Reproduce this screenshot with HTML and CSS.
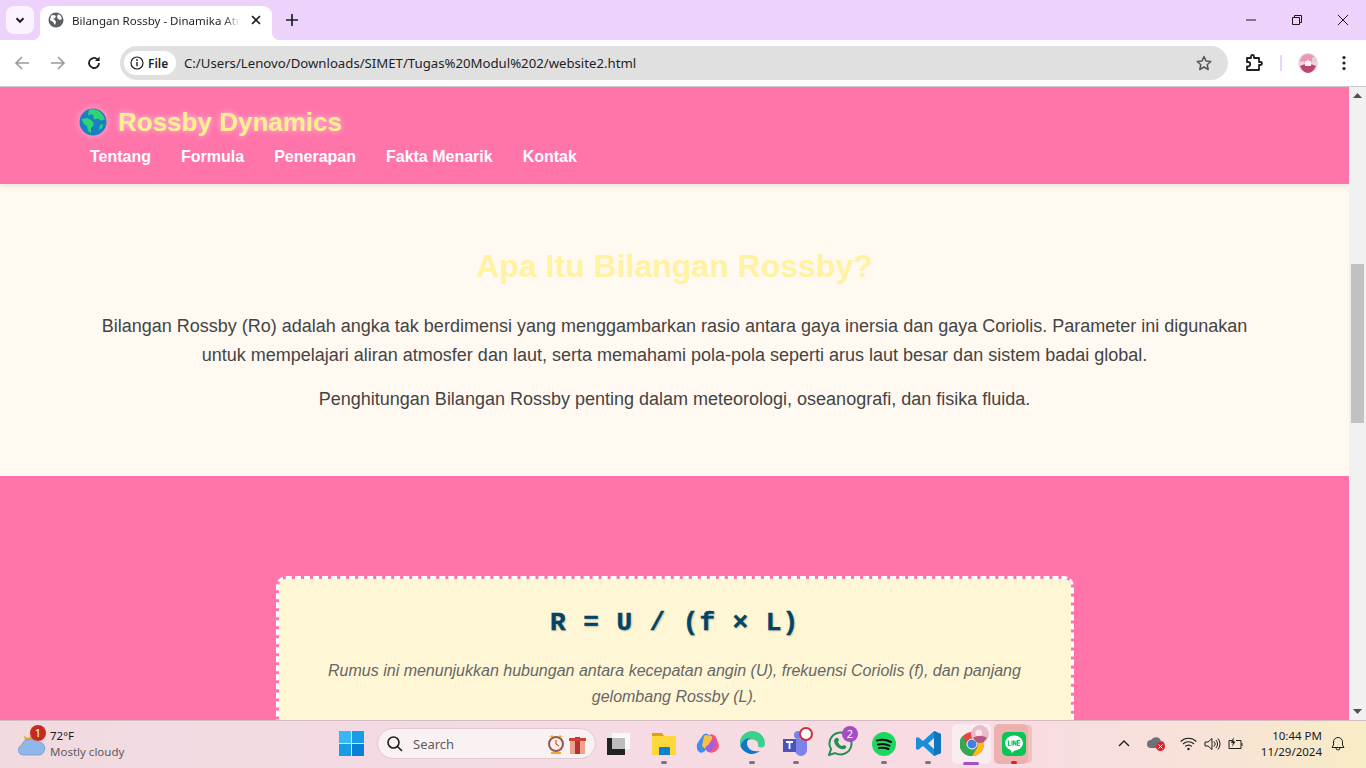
FILE: index.html
```html
<!DOCTYPE html>
<html lang="id">
<head>
<meta charset="utf-8">
<title>Bilangan Rossby - Dinamika Atmosfer</title>
<link rel="stylesheet" href="styles.css">
</head>
<body>
<div class="screen">
  <div class="tabstrip">
    <div class="tab-menu"><svg width="12" height="12" viewBox="0 0 12 12"><path d="M2.5 4.2 6 7.8l3.5-3.6" fill="none" stroke="#1f1f1f" stroke-width="2"/></svg></div>
    <div class="tab">
      <svg class="favicon" width="16" height="16" viewBox="0 0 16 16"><circle cx="8" cy="8" r="7.5" fill="#5b5e63"/><path d="M3 3.5 6 3l2 1-1 2-2 1 2 1 1 2-1 3-2-3-3-2zM10 2l3 2 1 3-2 1-2-1-1-2z" fill="#fff"/></svg>
      <span class="tab-title">Bilangan Rossby - Dinamika Atmosfer</span>
      <svg class="tab-close" width="10" height="10" viewBox="0 0 10 10"><path d="M1 1l8 8M9 1 1 9" stroke="#1f1f1f" stroke-width="1.7"/></svg>
    </div>
    <svg class="new-tab" width="12" height="12" viewBox="0 0 12 12"><path d="M6 0v12M0 6h12" stroke="#1f1f1f" stroke-width="1.7"/></svg>
    <div class="window-controls">
      <svg width="10" height="10" viewBox="0 0 10 10"><path d="M0 5h10" stroke="#1a1a1a"/></svg>
      <svg width="10" height="10" viewBox="0 0 10 10"><path d="M.5 2.5h7v7h-7zM2.5 2.5v-2h7v7h-2" fill="none" stroke="#1a1a1a"/></svg>
      <svg width="10" height="10" viewBox="0 0 10 10"><path d="M0 0l10 10M10 0 0 10" stroke="#1a1a1a"/></svg>
    </div>
  </div>

  <div class="toolbar">
    <svg class="nav-icon" width="16" height="16" viewBox="0 0 16 16"><path d="M15 8H2M8 2 2 8l6 6" fill="none" stroke="#9b9b9b" stroke-width="1.6"/></svg>
    <svg class="nav-icon" width="16" height="16" viewBox="0 0 16 16"><path d="M1 8h13M8 2l6 6-6 6" fill="none" stroke="#9b9b9b" stroke-width="1.6"/></svg>
    <svg class="nav-icon" width="16" height="16" viewBox="0 0 16 16"><path d="M13 8a5 5 0 1 1-1.6-3.7" fill="none" stroke="#1f1f1f" stroke-width="1.8"/><path d="M13.6 1.5v4.6H9z" fill="#1f1f1f"/></svg>
    <div class="omnibox">
      <div class="chip">
        <svg width="14" height="14" viewBox="0 0 14 14"><circle cx="7" cy="7" r="6" fill="none" stroke="#1f1f1f" stroke-width="1.2"/><path d="M7 6v4.2" stroke="#1f1f1f" stroke-width="1.4"/><circle cx="7" cy="4" r=".9" fill="#1f1f1f"/></svg>
        <span>File</span>
      </div>
      <span class="url">C:/Users/Lenovo/Downloads/SIMET/Tugas%20Modul%202/website2.html</span>
      <svg class="star" width="16" height="16" viewBox="0 0 16 16"><path d="M8 1.5 10 6l4.800.5-3.600 3.200 1 4.800L8 12l-4.200 2.500 1-4.800L1.200 6.500 6 6z" fill="none" stroke="#555" stroke-width="1.500" stroke-linejoin="round"/></svg>
    </div>
    <svg class="ext" width="18" height="18" viewBox="0 0 18 18"><path d="M2 4h4V2.500a1.500 1.500 0 0 1 3 0V4h5v4h1.500a1.500 1.500 0 0 1 0 3H14v5H2v-3.500h1a2 2 0 0 0 0-4.500H2z" fill="none" stroke="#1f1f1f" stroke-width="1.800" stroke-linejoin="round"/></svg>
    <div class="divider"></div>
    <svg class="avatar" width="20" height="20" viewBox="0 0 20 20"><circle cx="10" cy="10" r="10" fill="#f0d3dc"/><path d="M2 9q1-8 8-8t8 8l-3-2-2 3-3-4-3 4-2-2z" fill="#e89ab0"/><path d="M2 13q8-4 16 0-3 7-8 7t-8-7z" fill="#b8476d"/><path d="M7 8h6v5H7z" fill="#fbeff2"/><circle cx="16" cy="6" r="2" fill="#d9d9d9"/></svg>
    <svg class="kebab" width="4" height="16" viewBox="0 0 4 16"><circle cx="2" cy="2.500" r="1.600" fill="#1f1f1f"/><circle cx="2" cy="8" r="1.600" fill="#1f1f1f"/><circle cx="2" cy="13.500" r="1.600" fill="#1f1f1f"/></svg>
  </div>

  <div class="viewport">
    <div class="page">
      <header class="site-header">
        <div class="brand">
          <svg class="globe" width="28" height="28" viewBox="0 0 28 28"><circle cx="14" cy="14" r="13.500" fill="#1b7fc4"/><path d="M10 1.500q5-1 9 1 5 3 7 9l-4 1-3-2-3 1-2-2 1-2-3-1-3 1zM3 11l5-1 4 2 3 3-1 3-2 2v5l-3-2-1-5-3-2-2-4z" fill="#2ed573"/><path d="M21 17l3-1-1 4-3 2z" fill="#2ed573"/></svg>
          <h1 class="brand-name">Rossby Dynamics</h1>
        </div>
        <nav class="site-nav">
          <a class="nav-link">Tentang</a>
          <a class="nav-link">Formula</a>
          <a class="nav-link">Penerapan</a>
          <a class="nav-link">Fakta Menarik</a>
          <a class="nav-link">Kontak</a>
        </nav>
      </header>

      <section class="intro">
        <h2 class="intro-title">Apa Itu Bilangan Rossby?</h2>
        <p class="intro-text">Bilangan Rossby (Ro) adalah angka tak berdimensi yang menggambarkan rasio antara gaya inersia dan gaya Coriolis. Parameter ini digunakan untuk mempelajari aliran atmosfer dan laut, serta memahami pola-pola seperti arus laut besar dan sistem badai global.</p>
        <p class="intro-text">Penghitungan Bilangan Rossby penting dalam meteorologi, oseanografi, dan fisika fluida.</p>
      </section>

      <section class="formula-section">
        <div class="formula-card">
          <div class="formula">R = U / (f × L)</div>
          <p class="formula-note">Rumus ini menunjukkan hubungan antara kecepatan angin (U), frekuensi Coriolis (f), dan panjang gelombang Rossby (L).</p>
        </div>
      </section>
    </div>
    <div class="scrollbar">
      <svg class="arrow" width="9" height="5" viewBox="0 0 9 5"><path d="M4.500 0 9 5H0z" fill="#505050"/></svg>
      <div class="thumb"></div>
      <svg class="arrow arrow-down" width="9" height="5" viewBox="0 0 9 5"><path d="M4.500 5 9 0H0z" fill="#505050"/></svg>
    </div>
  </div>

  <footer class="taskbar">
    <div class="weather">
      <svg class="weather-icon" width="28" height="26" viewBox="0 0 28 26"><path d="M7 14 3 13l4-3-1-5 4 2 4-3 1 6z" fill="#f2a531"/><path d="M5 24a5 5 0 0 1-1-9.800A8 8 0 0 1 18 11a6.500 6.500 0 0 1 4 13z" fill="#8fb7e8" stroke="#6f9bd8" stroke-width=".8"/></svg>
      <span class="weather-badge">1</span>
      <div class="weather-text">
        <span class="temp">72°F</span>
        <span class="cond">Mostly cloudy</span>
      </div>
    </div>
    <div class="center">
      <svg class="win" width="25" height="25" viewBox="0 0 25 25"><path d="M0 0h12v12H0z" fill="#39b7f0"/><path d="M13 0h12v12H13z" fill="#1a9be6"/><path d="M0 13h12v12H0z" fill="#1a9be6"/><path d="M13 13h12v12H13z" fill="#0a7fd6"/></svg>
      <div class="search">
        <svg width="16" height="16" viewBox="0 0 16 16"><circle cx="6.500" cy="6.500" r="5.500" fill="none" stroke="#1f1f1f" stroke-width="1.600"/><path d="m10.500 10.500 4.500 4.500" stroke="#1f1f1f" stroke-width="1.600"/></svg>
        <span class="search-label">Search</span>
        <svg class="search-art" width="38" height="20" viewBox="0 0 38 20"><circle cx="8" cy="10" r="7" fill="#fbeee4" stroke="#8d5a5a" stroke-width="2"/><path d="M8 6v4l3 2" stroke="#c0392b" fill="none"/><path d="M1 3l3-2 2 2M15 3l-3-2-2 2" fill="#efa92f"/><path d="M3 18h10v2H3z" fill="#efa92f"/><path d="M22 7h15v13H22z" fill="#e8a58e"/><path d="M27 3h5v17h-5z" fill="#b8312f"/><path d="M21 4h17v3H21z" fill="#c8413a"/></svg>
      </div>
      <div class="apps">
        <div class="app app-first">
          <svg width="23" height="22" viewBox="0 0 23 22"><path d="M5 0h18v16H5z" fill="#f8f8f8"/><path d="M0 5h18v17H0z" fill="#222"/><path d="M5 5h13v11H5z" fill="#bdbdbd"/></svg>
        </div>
        <div class="app">
          <svg width="26" height="24" viewBox="0 0 26 24"><path d="M1 1h10l2 3h12v19H1z" fill="#fdd73c"/><path d="M1 1h10l2 3H1z" fill="#d9a21b"/><path d="M9 15h9a1 1 0 0 1 1 1v7H8v-7a1 1 0 0 1 1-1z" fill="#0f7fd0"/></svg>
          <i class="dot"></i>
        </div>
        <div class="app">
          <svg width="24" height="24" viewBox="0 0 24 24"><path d="M7 3q3-3 6 0l2 4-6 12q-3 3-6 1-3-3-2-8z" fill="#3f8fe8"/><path d="M13 3q4-2 7 2l3 8q0 4-3 6-4 3-7 1l-2-3 5-12z" fill="#f0587a"/><path d="M8 4q3-2 5 0l3 3-7 10-3-3z" fill="#f7c23c"/><path d="M9 16l9-9 2 6-6 7q-3 1-5-4z" fill="#a85ce0"/></svg>
        </div>
        <div class="app">
          <svg width="25" height="25" viewBox="0 0 25 25"><path d="M12.500 0a12.500 12.500 0 0 1 12.500 12.500c0 2-1 4-4 4-2 0-3-1-3-2 1-4-3-6-6-6-6 0-11 5-12 7A12.500 12.500 0 0 1 12.500 0z" fill="#3dcf8e"/><path d="M.5 15.500C1.500 10 6 7 10 7c-3 2-4 6-2 9 2 4 7 5 12 4a12.500 12.500 0 0 1-19.500-4.500z" fill="#0f77c8"/></svg>
          <i class="dot"></i>
        </div>
        <div class="app">
          <svg width="27" height="25" viewBox="0 0 27 25"><path d="M8 8h14a2 2 0 0 1 2 2v9a6 6 0 0 1-12 0z" fill="#7b83eb"/><circle cx="15" cy="4" r="4" fill="#7b83eb"/><path d="M0 8h13v13H0z" fill="#4b53bc"/><path d="M3 11h7M6.500 11v7" stroke="#fff" stroke-width="1.800"/></svg>
          <span class="ring"></span>
          <i class="dot"></i>
        </div>
        <div class="app">
          <svg width="25" height="25" viewBox="0 0 25 25"><path d="M1 24l2-6a11 11 0 1 1 4 4z" fill="none" stroke="#1f8f54" stroke-width="2"/><path d="M8 7q2-1 3 2l-1 2q1 3 4 4l2-1q3 1 2 3-2 2-5 1-6-2-7-8 0-2 2-3z" fill="#1f8f54"/></svg>
          <span class="app-badge">2</span>
        </div>
        <div class="app">
          <svg width="24" height="24" viewBox="0 0 24 24"><circle cx="12" cy="12" r="12" fill="#1ed760"/><path d="M5 8.500q7-2 14 1.500M6 12.500q6-1.500 11.500 1.200M7 16q5-1 9.500 1" fill="none" stroke="#111" stroke-width="2" stroke-linecap="round"/></svg>
          <i class="dot"></i>
        </div>
        <div class="app">
          <svg width="25" height="25" viewBox="0 0 25 25"><path d="M18 0l7 3v19l-7 3-11-10-5 4-2-1v-11l2-1 5 4zM18 7l-6 5.500 6 5.500z" fill="#1a8fd8"/><path d="M18 0l7 3v19l-7 3z" fill="#0f76bd"/></svg>
          <i class="dot"></i>
        </div>
        <div class="app app-active">
          <svg width="24" height="24" viewBox="0 0 24 24"><circle cx="12" cy="12" r="12" fill="#e8453c"/><path d="M22.400 6A12 12 0 0 1 12 24l5-8.500A6 6 0 0 0 16 8z" fill="#f9bc15"/><path d="M12 24A12 12 0 0 1 2.500 4l5 8.500A6 6 0 0 0 17 15.500z" fill="#34a853"/><circle cx="12" cy="12" r="5" fill="#3f7fe8" stroke="#fff"/></svg>
          <svg class="chrome-profile" width="18" height="18" viewBox="0 0 16 16"><circle cx="8" cy="8" r="8" fill="#e7bccb"/><circle cx="7" cy="7" r="3" fill="#f8e6ec"/><path d="M2 11q6-3 12 0-2 5-6 5t-6-5z" fill="#b9577c"/></svg>
          <i class="dot dot-active"></i>
        </div>
        <div class="app app-line">
          <svg width="24" height="24" viewBox="0 0 24 24"><rect width="24" height="24" rx="5" fill="#06c755"/><ellipse cx="12" cy="11" rx="9" ry="7.500" fill="#fff"/><path d="M8 17l2 4 4-4z" fill="#fff"/><path d="M6.500 8.500v5h2M10 8.500v5M11.500 13.500v-5l2.500 5v-5M18 8.500h-2.500v5H18M15.500 11H18" fill="none" stroke="#06c755" stroke-width="1.100"/></svg>
          <i class="dot dot-red"></i>
        </div>
      </div>
    </div>
    <div class="tray">
      <svg class="chev" width="12" height="7" viewBox="0 0 12 7"><path d="M1 6l5-5 5 5" fill="none" stroke="#1f1f1f" stroke-width="1.400"/></svg>
      <span class="tray-cloud">
        <svg width="19" height="17" viewBox="0 0 19 17"><path d="M4 13a4 4 0 0 1 0-8 5.500 5.500 0 0 1 10 1 3.500 3.500 0 0 1 0 7z" fill="#6d7278"/><circle cx="13.500" cy="11.500" r="4.500" fill="#e0202c"/><path d="m11.500 9.500 4 4m0-4-4 4" stroke="#fff"/></svg>
      </span>
      <svg class="tray-wifi" width="17" height="14" viewBox="0 0 17 14"><path d="M.7 4.500a11 11 0 0 1 15.600 0M3 7a8 8 0 0 1 11 0M5.300 9.500a4.500 4.500 0 0 1 6.400 0" fill="none" stroke="#1f1f1f" stroke-width="1.100"/><circle cx="8.500" cy="12" r="1.200" fill="#1f1f1f"/></svg>
      <svg width="17" height="14" viewBox="0 0 17 14"><path d="M1 5h3l4-3.500v11L4 9H1z" fill="none" stroke="#1f1f1f"/><path d="M10 4.500a3.500 3.500 0 0 1 0 5M12 3a6 6 0 0 1 0 8M14 1.500a8.500 8.500 0 0 1 0 11" fill="none" stroke="#1f1f1f"/></svg>
      <svg width="16" height="14" viewBox="0 0 16 14"><path d="M4 3.500H1v8h12v-8H8M14 6v3" fill="none" stroke="#1f1f1f"/><path d="M5.500 0 3 6h2l-1 4 3.500-5.500h-2z" fill="#1f1f1f"/></svg>
      <div class="clock"><span>10:44 PM</span><span>11/29/2024</span></div>
      <svg class="bell" width="14" height="15" viewBox="0 0 14 15"><path d="M1 11.500h12l-1.500-2.500V6a4.500 4.500 0 0 0-9 0v3zM5 12a2 2 0 0 0 4 0" fill="none" stroke="#1f1f1f"/></svg>
    </div>
  </footer>
</div>
</body>
</html>
```

FILE: styles.css
```css
* { box-sizing: border-box; }
html, body { margin: 0; height: 100%; overflow: hidden; }
body { font-family: "Liberation Sans", Arial, sans-serif; }
svg { flex: none; display: block; }

.screen { width: 1366px; height: 768px; display: flex; flex-direction: column; overflow: hidden; }

/* Browser chrome */
.tabstrip { height: 40px; background: #edd3fc; display: flex; align-items: flex-start; flex: none; }
.tab-menu { width: 28px; height: 28px; margin: 6px 0 0 6px; background: #fbf3ff; border-radius: 8px; display: flex; align-items: center; justify-content: center; }
.tab { width: 232px; height: 34px; margin: 6px 0 0 6px; padding: 0 8px 6px; background: #fff; border-radius: 9px 9px 0 0; display: flex; align-items: center; position: relative; }
.tab::before, .tab::after { content: ""; position: absolute; bottom: 0; width: 8px; height: 8px; }
.tab::before { left: -8px; background: radial-gradient(circle at 0 0, transparent 8px, #fff 8.500px); }
.tab::after { right: -8px; background: radial-gradient(circle at 100% 0, transparent 8px, #fff 8.500px); }
.tab-title { width: 168px; margin-left: 8px; font: 11.500px "Noto Sans", sans-serif; color: #1f1f1f; white-space: nowrap; overflow: hidden; -webkit-mask-image: linear-gradient(90deg, #000 90%, transparent); mask-image: linear-gradient(90deg, #000 90%, transparent); }
.tab-close { margin-left: 11px; }
.new-tab { margin: 14px 0 0 14px; }
.window-controls { margin-left: auto; height: 40px; display: flex; align-items: center; gap: 36px; padding-right: 18px; }
.window-controls svg { width: 10px; height: 10px; }

.toolbar { height: 47px; flex: none; background: #fff; border-bottom: 1px solid #c9c9c9; border-radius: 8px 8px 0 0; display: flex; align-items: center; padding: 0 14px 0 14px; }
.nav-icon { margin-right: 20px; }
.nav-icon:nth-child(3) { margin-right: 18px; }
.omnibox { width: 1108px; height: 34px; background: #e0e0e0; border-radius: 17px; display: flex; align-items: center; padding: 0 16px 0 4px; }
.chip { height: 24px; width: 52px; background: #fff; border-radius: 12px; display: flex; align-items: center; gap: 4px; padding-left: 6px; font: 600 12px "Noto Sans", sans-serif; color: #1f1f1f; }
.url { margin-left: 8px; font: 13.200px "Noto Sans", sans-serif; color: #1f1f1f; }
.star { margin-left: auto; }
.ext { margin-left: 17px; }
.divider { width: 2px; height: 16px; margin-left: 17px; background: #edd3fc; }
.avatar { margin-left: 16px; }
.kebab { margin-left: 24px; }

/* Page */
.viewport { flex: none; height: 633px; display: flex; overflow: hidden; }
.page { width: 1349px; height: 633px; overflow: hidden; background: #ff74a9; }
.site-header { height: 97px; padding: 20px 78px 0; background: #ff74a9; box-shadow: 0 2px 6px rgba(0, 0, 0, .1); position: relative; }
.brand { display: flex; align-items: center; height: 30px; }
.globe { margin: 0 11px 0 1px; filter: drop-shadow(0 0 4px rgba(255, 255, 255, .45)); }
.brand-name { margin: 0; font-size: 26px; font-weight: 700; color: #fff08f; text-shadow: 0 0 6px rgba(255, 255, 255, .6); line-height: 30px; }
.site-nav { display: flex; gap: 30px; padding-left: 12px; margin-top: 9px; }
.nav-link { font-size: 16px; font-weight: 700; color: #fff; line-height: 22px; }

.intro { height: 292px; padding: 61px 78px 0; background: #fff9f1; text-align: center; }
.intro-title { margin: 0 0 25px; font-size: 32px; font-weight: 700; line-height: 42px; color: #fff2a1; }
.intro-text { margin: 0 0 15px; font-size: 18px; line-height: 29px; color: #444; }

.formula-section { height: 244px; padding-top: 100px; background: #ff74a9; }
.formula-card { width: 798px; height: 260px; margin: 0 auto; padding: 26px 40px 0; background: #fff6d6; background-clip: padding-box; border: 3px dashed #fff; border-radius: 10px; text-align: center; }
.formula { font-family: "Liberation Mono", "Courier New", monospace; font-size: 26px; font-weight: 700; letter-spacing: 1px; line-height: 36px; color: #004466; -webkit-text-stroke: .4px #004466; text-shadow: 1px 1px 2px rgba(0, 0, 0, .25); }
.formula-note { margin: 17px 0 0; font-size: 16px; font-style: italic; line-height: 26px; color: #666; }

.scrollbar { width: 17px; height: 633px; background: #f1f1f1; position: relative; display: flex; flex-direction: column; align-items: center; padding-top: 6px; }
.thumb { position: absolute; top: 177px; left: 2px; width: 13px; height: 159px; background: #c1c1c1; }
.arrow-down { margin-top: auto; margin-bottom: 6px; }

/* Taskbar */
.taskbar { flex: none; height: 48px; border-top: 1px solid #d5bcc2; background: linear-gradient(90deg, #f0dae0 0%, #f6dbe4 45%, #f9dce3 75%, #f7e2d8 88%, #f7edc6 100%); display: flex; align-items: center; position: relative; }
.weather { width: 339px; height: 47px; display: flex; align-items: center; padding-left: 18px; position: relative; flex: none; margin-top: -2px; }
.weather-badge { position: absolute; left: 30px; top: 5px; width: 16px; height: 16px; border-radius: 50%; background: #c42b1c; color: #fff; font: 11px/16px "Noto Sans", sans-serif; text-align: center; }
.weather-text { margin-left: 4px; display: flex; flex-direction: column; font: 11.500px/16px "Noto Sans", sans-serif; }
.temp { color: #1a1a1a; }
.cond { color: #5c5c5c; }
.center { display: flex; align-items: center; flex: none; margin-top: -2px; }
.win { margin-right: 13px; }
.search { width: 219px; height: 31px; background: #faf1f3; border: 1px solid #dfc9cf; border-radius: 16px; display: flex; align-items: center; padding: 0 9px; }
.search-label { margin-left: 10px; font: 13px "Noto Sans", sans-serif; color: #5c5c5c; }
.search-art { margin-left: auto; }
.apps { display: flex; align-items: center; }
.app { width: 44px; height: 47px; display: flex; align-items: center; justify-content: center; position: relative; }
.app-first { margin-right: 2px; }
.dot { position: absolute; left: 19px; bottom: 3px; width: 6px; height: 3px; border-radius: 2px; background: #7c7478; }
.dot-active { left: 14px; width: 16px; background: #a24fd0; }
.dot-red { background: #d9231b; }
.ring { position: absolute; left: 25px; top: 7px; width: 14px; height: 14px; border-radius: 50%; background: #fff; border: 2px solid #c9303a; }
.app-badge { position: absolute; left: 24px; top: 6px; width: 16px; height: 16px; border-radius: 50%; background: #a64cc4; color: #fff; font: 11px/16px "Noto Sans", sans-serif; text-align: center; }
.app-active { width: 39px; height: 40px; margin: 0 2px; background: #f9ecef; border-radius: 5px; }
.app-active .dot-active { left: 11px; bottom: -1px; }
.chrome-profile { position: absolute; right: 2px; top: 1px; }
.app-line { width: 34px; height: 40px; margin: 0 2px 0 1px; padding-left: 8px; justify-content: flex-start; background: #ecb0ae; border-radius: 5px; box-shadow: 5px 0 0 -1px #efc2bd; }
.app-line .dot-red { left: 17px; bottom: 0; }
.tray { margin-left: auto; display: flex; align-items: center; padding-right: 21px; margin-top: -2px; }
.tray > svg { margin-left: 7px; }
.tray > .chev { margin-left: 0; margin-right: 17px; }
.tray-cloud { margin-right: 7px; }
.clock { margin-left: 17px; display: flex; flex-direction: column; align-items: flex-end; font: 11.500px/16px "Noto Sans", sans-serif; color: #1a1a1a; }
.tray > .bell { margin-left: 9px; }
```
